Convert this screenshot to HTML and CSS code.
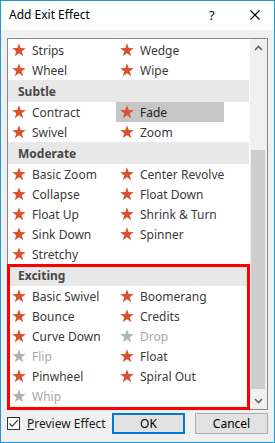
FILE: index.html
```html
<!DOCTYPE html>
<html>
<head>
<meta charset="utf-8">
<link rel="stylesheet" href="styles.css">
</head>
<body>
<div class="window">
  <div class="titlebar">
    <span class="title">Add Exit Effect</span>
    <span class="help">?</span>
    <span class="close"><svg width="10" height="10" viewBox="0 0 10 10"><path d="M0.5 0.5 L9.5 9.5 M9.5 0.5 L0.5 9.5" stroke="#000" stroke-width="1.1" fill="none"/></svg></span>
  </div>
  <div class="body">
    <div class="listbox">
      <div class="items">
        <div class="grid">
          <div class="item"><svg class="star"><use href="#star"/></svg>Strips</div>
          <div class="item"><svg class="star"><use href="#star"/></svg>Wedge</div>
          <div class="item"><svg class="star"><use href="#star"/></svg>Wheel</div>
          <div class="item"><svg class="star"><use href="#star"/></svg>Wipe</div>
        </div>
        <div class="header">Subtle</div>
        <div class="grid">
          <div class="item"><svg class="star"><use href="#star"/></svg>Contract</div>
          <div class="item selected"><svg class="star"><use href="#star"/></svg>Fade</div>
          <div class="item"><svg class="star"><use href="#star"/></svg>Swivel</div>
          <div class="item"><svg class="star"><use href="#star"/></svg>Zoom</div>
        </div>
        <div class="header">Moderate</div>
        <div class="grid">
          <div class="item"><svg class="star"><use href="#star"/></svg>Basic Zoom</div>
          <div class="item"><svg class="star"><use href="#star"/></svg>Center Revolve</div>
          <div class="item"><svg class="star"><use href="#star"/></svg>Collapse</div>
          <div class="item"><svg class="star"><use href="#star"/></svg>Float Down</div>
          <div class="item"><svg class="star"><use href="#star"/></svg>Float Up</div>
          <div class="item"><svg class="star"><use href="#star"/></svg>Shrink &amp; Turn</div>
          <div class="item"><svg class="star"><use href="#star"/></svg>Sink Down</div>
          <div class="item"><svg class="star"><use href="#star"/></svg>Spinner</div>
          <div class="item"><svg class="star"><use href="#star"/></svg>Stretchy</div>
        </div>
        <div class="header">Exciting</div>
        <div class="grid">
          <div class="item"><svg class="star"><use href="#star"/></svg>Basic Swivel</div>
          <div class="item"><svg class="star"><use href="#star"/></svg>Boomerang</div>
          <div class="item"><svg class="star"><use href="#star"/></svg>Bounce</div>
          <div class="item"><svg class="star"><use href="#star"/></svg>Credits</div>
          <div class="item"><svg class="star"><use href="#star"/></svg>Curve Down</div>
          <div class="item disabled"><svg class="star"><use href="#star"/></svg>Drop</div>
          <div class="item disabled"><svg class="star"><use href="#star"/></svg>Flip</div>
          <div class="item"><svg class="star"><use href="#star"/></svg>Float</div>
          <div class="item"><svg class="star"><use href="#star"/></svg>Pinwheel</div>
          <div class="item"><svg class="star"><use href="#star"/></svg>Spiral Out</div>
          <div class="item disabled"><svg class="star"><use href="#star"/></svg>Whip</div>
        </div>
      </div>
      <div class="scrollbar">
        <div class="arrow"><svg width="9" height="6" viewBox="0 0 9 6"><path d="M1 5 L4.5 1.5 L8 5" stroke="#606060" stroke-width="1.6" fill="none"/></svg></div>
        <div class="track"><div class="thumb"></div></div>
        <div class="arrow"><svg width="9" height="6" viewBox="0 0 9 6"><path d="M1 1 L4.5 4.5 L8 1" stroke="#606060" stroke-width="1.6" fill="none"/></svg></div>
      </div>
    </div>
    <div class="footer">
      <label class="check">
        <span class="box"><svg width="11" height="11" viewBox="0 0 11 11"><path d="M1.5 5.5 L4.2 8.3 L9.7 2.2" stroke="#333" stroke-width="1.2" fill="none"/></svg></span>
        <span><u>P</u>review Effect</span>
      </label>
      <div class="buttons">
        <button class="btn default">OK</button>
        <button class="btn">Cancel</button>
      </div>
    </div>
  </div>
  <div class="annotation"></div>
</div>
<svg width="0" height="0" class="defs">
  <defs>
    <symbol id="star" viewBox="0 0 14 14">
      <path d="M7 0.3 L8.7 5.1 L13.8 5.2 L9.7 8.3 L11.2 13.3 L7 10.3 L2.8 13.3 L4.3 8.3 L0.2 5.2 L5.3 5.1 Z"/>
    </symbol>
  </defs>
</svg>
</body>
</html>
```
FILE: styles.css
```css
html, body {
  margin: 0;
  padding: 0;
}
body {
  font-family: "Segoe UI", "Noto Sans", "Liberation Sans", sans-serif;
  font-size: 12px;
  color: #333;
}
.defs {
  position: absolute;
}
.window {
  position: relative;
  width: 275px;
  height: 443px;
  box-sizing: border-box;
  border: 1px solid #1c9ad3;
  background: #f0f0f0;
  display: flex;
  flex-direction: column;
}
.titlebar {
  height: 29px;
  background: #fff;
  display: flex;
  align-items: center;
  padding-left: 8px;
  flex: none;
}
.title {
  font-size: 12px;
  color: #000;
  flex: 1;
  margin-top: -2px;
}
.help {
  font-size: 13px;
  color: #000;
  width: 41px;
  margin-top: -2px;
}
.close {
  width: 24px;
  display: flex;
  align-items: center;
  margin-top: -2px;
}
.body {
  padding: 8px 6px 0 6px;
  flex: 1;
  display: flex;
  flex-direction: column;
}
.listbox {
  height: 372px;
  box-sizing: border-box;
  border: 1px solid #828790;
  background: #fff;
  display: flex;
}
.items {
  width: 242px;
  padding-top: 1px;
  overflow: hidden;
}
.grid {
  display: grid;
  grid-template-columns: 108px 108px;
}
.item {
  height: 20px;
  display: flex;
  align-items: center;
  padding-left: 4px;
  gap: 6px;
  white-space: nowrap;
  color: #3a3a3a;
}
.star {
  width: 14px;
  height: 14px;
  fill: #d9522e;
  flex: none;
}
.item.disabled {
  color: #a8a8a8;
}
.item.disabled .star {
  fill: #b3b3b3;
}
.item.selected {
  background: #c6c6c6;
  color: #222;
}
.header {
  height: 22px;
  background: #e8e8e8;
  font-weight: bold;
  color: #474747;
  display: flex;
  align-items: center;
  padding-left: 10px;
}
.scrollbar {
  width: 17px;
  margin-left: 1px;
  background: #f0f0f0;
  display: flex;
  flex-direction: column;
}
.arrow {
  height: 17px;
  display: flex;
  align-items: center;
  justify-content: center;
  flex: none;
}
.track {
  flex: 1;
  padding: 94px 2px 3px 1px;
  display: flex;
}
.thumb {
  flex: 1;
  background: #cdcdcd;
}
.footer {
  display: flex;
  align-items: center;
  margin-top: 3px;
  height: 21px;
}
.check {
  display: flex;
  align-items: center;
  gap: 7px;
  flex: 1;
  color: #1a1a1a;
}
.box {
  width: 13px;
  height: 13px;
  box-sizing: border-box;
  border: 1px solid #333;
  background: #fff;
  display: flex;
  align-items: center;
  justify-content: center;
}
.buttons {
  display: flex;
  gap: 10px;
}
.btn {
  width: 73px;
  height: 21px;
  box-sizing: border-box;
  font-family: inherit;
  font-size: 12px;
  color: #000;
  background: #e1e1e1;
  border: 1px solid #adadad;
  padding: 0;
}
.btn.default {
  border: 2px solid #0078d7;
}
.annotation {
  position: absolute;
  left: 6px;
  top: 263px;
  width: 243px;
  height: 146px;
  box-sizing: border-box;
  border: 3px solid #ff0000;
  pointer-events: none;
}
```
